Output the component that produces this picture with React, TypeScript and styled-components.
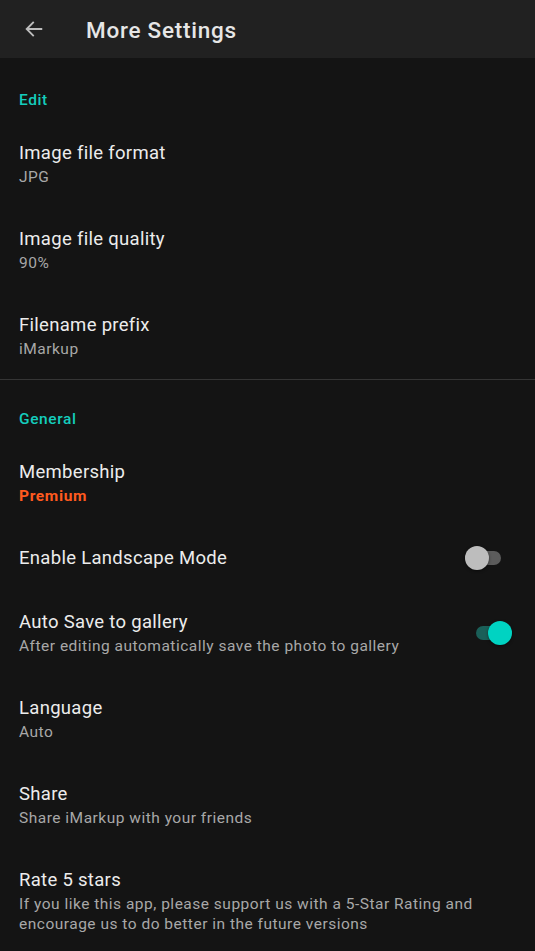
import styled, { createGlobalStyle } from "styled-components";

const GlobalStyle = createGlobalStyle`
  html, body {
    margin: 0;
    padding: 0;
    background: #141414;
  }
  body {
    font-family: Roboto, "Noto Sans", sans-serif;
  }
`;

type Item = {
  title: string;
  sub?: string;
  premium?: boolean;
  toggle?: "on" | "off";
};

const editItems: Item[] = [
  { title: "Image file format", sub: "JPG" },
  { title: "Image file quality", sub: "90%" },
  { title: "Filename prefix", sub: "iMarkup" },
];

const generalItems: Item[] = [
  { title: "Membership", sub: "Premium", premium: true },
  { title: "Enable Landscape Mode", toggle: "off" },
  {
    title: "Auto Save to gallery",
    sub: "After editing automatically save the photo to gallery",
    toggle: "on",
  },
  { title: "Language", sub: "Auto" },
  { title: "Share", sub: "Share iMarkup with your friends" },
  {
    title: "Rate 5 stars",
    sub: "If you like this app, please support us with a 5-Star Rating and encourage us to do better in the future versions",
  },
];

const App = () => {
  return (
    <Page>
      <GlobalStyle />
      <Header>
        <BackButton aria-label='back'>
          <svg width='22' height='22' viewBox='0 0 24 24' fill='none'>
            <path
              d='M20 12H4.5M11 5l-7 7 7 7'
              stroke='#bdbdbd'
              strokeWidth='2'
              strokeLinecap='square'
            />
          </svg>
        </BackButton>
        <Title>More Settings</Title>
      </Header>

      <Category>Edit</Category>
      {editItems.map((item) => (
        <SettingRow key={item.title} item={item} />
      ))}
      <Divider />
      <Category $afterDivider>General</Category>
      {generalItems.map((item) => (
        <SettingRow key={item.title} item={item} />
      ))}
    </Page>
  );
};
export default App;

const SettingRow = ({ item }: { item: Item }) => {
  return (
    <Row>
      <Texts>
        <RowTitle>{item.title}</RowTitle>
        {item.sub && <RowSub $premium={item.premium}>{item.sub}</RowSub>}
      </Texts>
      {item.toggle && (
        <Switch $on={item.toggle === "on"}>
          <Knob $on={item.toggle === "on"} />
        </Switch>
      )}
    </Row>
  );
};

const Page = styled.div`
  width: 535px;
  min-height: 951px;
  background: #141414;
  overflow: hidden;
`;

const Header = styled.header`
  height: 58px;
  background: #212121;
  display: flex;
  align-items: center;
`;

const BackButton = styled.div`
  width: 22px;
  height: 22px;
  margin-left: 23px;
  margin-right: 41px;
  display: flex;
`;

const Title = styled.h1`
  margin: 0;
  padding-top: 2px;
  font-size: 22.5px;
  font-weight: 500;
  color: #e6e6e6;
  letter-spacing: 0.75px;
`;

const Category = styled.div<{ $afterDivider?: boolean }>`
  padding: ${({ $afterDivider }) => ($afterDivider ? "29px" : "32px")} 19px 11px;
  font-size: 15.5px;
  line-height: 20px;
  font-weight: 500;
  letter-spacing: 0.6px;
  color: #14cdbd;
`;

const Divider = styled.div`
  height: 1px;
  background: #353535;
`;

const Row = styled.div`
  display: flex;
  align-items: center;
  padding: 20px 19px;
`;

const Texts = styled.div`
  flex: 1;
  min-width: 0;
`;

const RowTitle = styled.div`
  font-size: 18.5px;
  line-height: 24px;
  letter-spacing: 0.3px;
  color: #ececec;
`;

const RowSub = styled.div<{ $premium?: boolean }>`
  margin-top: 2px;
  font-size: 15.5px;
  line-height: 20px;
  letter-spacing: ${({ $premium }) => ($premium ? "0.65px" : "0.5px")};
  color: ${({ $premium }) => ($premium ? "#ff5a1f" : "#a8a8a8")};
  font-weight: ${({ $premium }) => ($premium ? 700 : 400)};
  padding-right: 20px;
`;

const Switch = styled.div<{ $on: boolean }>`
  position: relative;
  width: 36px;
  height: 14px;
  border-radius: 7px;
  flex-shrink: 0;
  margin-right: ${({ $on }) => ($on ? "4px" : "15px")};
  background: ${({ $on }) => ($on ? "#1a5f58" : "#5c5c5c")};
`;

const Knob = styled.div<{ $on: boolean }>`
  position: absolute;
  top: -5px;
  left: ${({ $on }) => ($on ? "12px" : "0")};
  width: 24px;
  height: 24px;
  border-radius: 50%;
  background: ${({ $on }) => ($on ? "#00d3c2" : "#bdbdbd")};
  box-shadow: 0 1px 3px rgba(0, 0, 0, 0.5);
`;
